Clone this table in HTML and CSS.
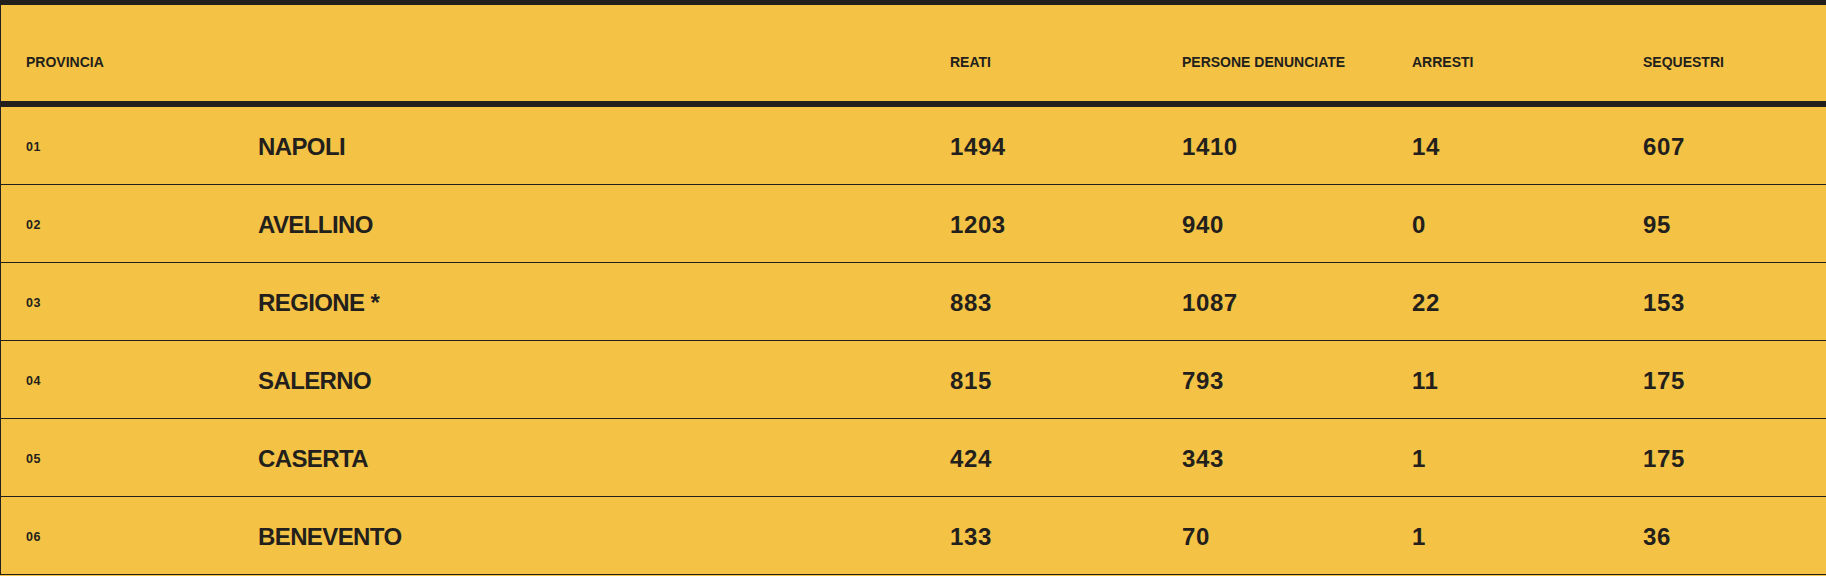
FILE: index.html
```html
<!DOCTYPE html>
<html lang="it">
<head>
<meta charset="utf-8">
<title>Province</title>
<link rel="stylesheet" href="styles.css">
</head>
<body>
<div class="board">
  <div class="row head">
    <div class="cell">PROVINCIA</div>
    <div class="cell"></div>
    <div class="cell">REATI</div>
    <div class="cell">PERSONE DENUNCIATE</div>
    <div class="cell">ARRESTI</div>
    <div class="cell">SEQUESTRI</div>
  </div>
  <div class="row">
    <div class="cell idx">01</div>
    <div class="cell name">NAPOLI</div>
    <div class="cell num">1494</div>
    <div class="cell num">1410</div>
    <div class="cell num">14</div>
    <div class="cell num">607</div>
  </div>
  <div class="row">
    <div class="cell idx">02</div>
    <div class="cell name">AVELLINO</div>
    <div class="cell num">1203</div>
    <div class="cell num">940</div>
    <div class="cell num">0</div>
    <div class="cell num">95</div>
  </div>
  <div class="row">
    <div class="cell idx">03</div>
    <div class="cell name">REGIONE *</div>
    <div class="cell num">883</div>
    <div class="cell num">1087</div>
    <div class="cell num">22</div>
    <div class="cell num">153</div>
  </div>
  <div class="row">
    <div class="cell idx">04</div>
    <div class="cell name">SALERNO</div>
    <div class="cell num">815</div>
    <div class="cell num">793</div>
    <div class="cell num">11</div>
    <div class="cell num">175</div>
  </div>
  <div class="row">
    <div class="cell idx">05</div>
    <div class="cell name">CASERTA</div>
    <div class="cell num">424</div>
    <div class="cell num">343</div>
    <div class="cell num">1</div>
    <div class="cell num">175</div>
  </div>
  <div class="row">
    <div class="cell idx">06</div>
    <div class="cell name">BENEVENTO</div>
    <div class="cell num">133</div>
    <div class="cell num">70</div>
    <div class="cell num">1</div>
    <div class="cell num">36</div>
  </div>
</div>
</body>
</html>
```
FILE: styles.css
```css
html, body {
  margin: 0;
  padding: 0;
  background: #f4c345;
}

body {
  font-family: "Liberation Sans", Arial, sans-serif;
  color: #231f1c;
}

.board {
  background: #f4c345;
  border-top: 5px solid #231f1c;
  border-left: 1px solid #231f1c;
}

.row {
  display: grid;
  grid-template-columns: 232px 692px 232px 230px 231px 1fr;
  align-items: center;
  box-sizing: border-box;
  height: 78px;
  padding-top: 2px;
  border-bottom: 1px solid #231f1c;
}

.row.head {
  height: 102px;
  padding-top: 49px;
  align-items: start;
  border-bottom: 6px solid #231f1c;
}

.cell {
  padding-left: 25px;
  font-weight: 700;
  white-space: nowrap;
}

.head .cell {
  font-size: 14px;
  line-height: 16px;
}

.idx {
  font-size: 12.5px;
  letter-spacing: 0.6px;
}

.name {
  font-size: 24px;
  letter-spacing: -0.6px;
}

.num {
  font-size: 24px;
  letter-spacing: 0.6px;
}
```
